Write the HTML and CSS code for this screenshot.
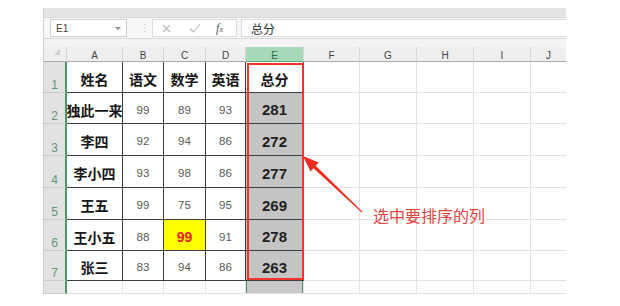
FILE: index.html
```html
<!DOCTYPE html>
<html lang="zh-CN">
<head>
  <meta charset="UTF-8" />
  <meta name="viewport" content="width=device-width, initial-scale=1.0"/>
  <title>选中要排序的列</title>
  <link rel="stylesheet" href="styles.css">
</head>
<body>

  <div class="sheet">
    <div class="ribbon-edge"></div>

    <!-- Formula bar -->
    <div class="formula-bar">
      <div class="name-box">E1<span class="drop"></span></div>
      <span class="grip">⋮</span>
      <div class="fx-tools">
        <svg class="tool-x" width="9" height="9" viewBox="0 0 9 9"><path d="M1 1L8 8M8 1L1 8" stroke="#b9b9b9" stroke-width="1.1" fill="none"/></svg>
        <svg class="tool-ok" width="12" height="10" viewBox="0 0 12 10"><path d="M1 5.5L4.5 9L11 1" stroke="#b9b9b9" stroke-width="1.1" fill="none"/></svg>
        <span class="fx">f<i>x</i></span>
      </div>
      <div class="formula-input">总分</div>
    </div>

    <!-- Grid -->
    <div class="grid">
      <div class="corner"><span class="corner-mark"></span></div>
      <div class="col-head">A</div>
      <div class="col-head">B</div>
      <div class="col-head">C</div>
      <div class="col-head">D</div>
      <div class="col-head sel">E</div>
      <div class="col-head">F</div>
      <div class="col-head">G</div>
      <div class="col-head">H</div>
      <div class="col-head">I</div>
      <div class="col-head">J</div>

      <div class="row-head">1</div>
      <div class="t name">姓名</div>
      <div class="t name">语文</div>
      <div class="t name">数学</div>
      <div class="t name">英语</div>
      <div class="t name">总分</div>
      <div class="c"></div><div class="c"></div><div class="c"></div><div class="c"></div><div class="c"></div>

      <div class="row-head">2</div>
      <div class="t name">独此一来</div>
      <div class="t num">99</div>
      <div class="t num">89</div>
      <div class="t num">93</div>
      <div class="t total">281</div>
      <div class="c"></div><div class="c"></div><div class="c"></div><div class="c"></div><div class="c"></div>

      <div class="row-head">3</div>
      <div class="t name">李四</div>
      <div class="t num">92</div>
      <div class="t num">94</div>
      <div class="t num">86</div>
      <div class="t total">272</div>
      <div class="c"></div><div class="c"></div><div class="c"></div><div class="c"></div><div class="c"></div>

      <div class="row-head">4</div>
      <div class="t name">李小四</div>
      <div class="t num">93</div>
      <div class="t num">98</div>
      <div class="t num">86</div>
      <div class="t total">277</div>
      <div class="c"></div><div class="c"></div><div class="c"></div><div class="c"></div><div class="c"></div>

      <div class="row-head">5</div>
      <div class="t name">王五</div>
      <div class="t num">99</div>
      <div class="t num">75</div>
      <div class="t num">95</div>
      <div class="t total">269</div>
      <div class="c"></div><div class="c"></div><div class="c"></div><div class="c"></div><div class="c"></div>

      <div class="row-head">6</div>
      <div class="t name">王小五</div>
      <div class="t num">88</div>
      <div class="t hl">99</div>
      <div class="t num">91</div>
      <div class="t total">278</div>
      <div class="c"></div><div class="c"></div><div class="c"></div><div class="c"></div><div class="c"></div>

      <div class="row-head">7</div>
      <div class="t name">张三</div>
      <div class="t num">83</div>
      <div class="t num">94</div>
      <div class="t num">86</div>
      <div class="t total">263</div>
      <div class="c"></div><div class="c"></div><div class="c"></div><div class="c"></div><div class="c"></div>

      <div class="row-head"></div>
      <div class="c"></div>
      <div class="c"></div>
      <div class="c"></div>
      <div class="c"></div>
      <div class="c picked"></div>
      <div class="c"></div><div class="c"></div><div class="c"></div><div class="c"></div><div class="c"></div>
    </div>

    <!-- red frame drawn over column E -->
    <div class="pick-box"></div>
  </div>

  <!-- Annotation -->
  <svg class="annot" width="620" height="306" viewBox="0 0 620 306">
    <polygon fill="#f02c20" points="303,156 318.7,162.6 315.7,165.8 362.3,211.6 361.7,212.4 313.5,168.2 310.5,171.4"/>
  </svg>
  <div class="note">选中要排序的列</div>

</body>
</html>
```

FILE: styles.css
```css
* {
  box-sizing: border-box;
}

body {
  margin: 0;
  padding: 8px 0 0 44px;
  width: 620px;
  height: 306px;
  overflow: hidden;
  position: relative;
  background: #fff;
  font-family: "Liberation Sans", "Noto Sans CJK SC", sans-serif;
  color: #333;
}

.sheet {
  position: relative;
  width: 523px;
  height: 286px;
  overflow: hidden;
  background: #f4f4f4;
  border-left: 1px solid #cfcfcf;
  margin-left: -1px;
}

.ribbon-edge {
  height: 10px;
  background: #e4e4e4;
  border-bottom: 1px solid #d9d9d9;
}

/* Formula bar */
.formula-bar {
  height: 21px;
  display: flex;
  align-items: center;
  padding-left: 6px;
  background: #f8f8f8;
  border-bottom: 1px solid #d8d8d8;
}

.name-box {
  position: relative;
  width: 77px;
  height: 18px;
  padding: 3px 0 0 5px;
  background: #fff;
  border: 1px solid #cdcdcd;
  font-size: 10px;
  color: #444;
}

.drop {
  position: absolute;
  right: 5px;
  top: 7px;
  border-left: 3px solid transparent;
  border-right: 3px solid transparent;
  border-top: 3px solid #888;
}

.grip {
  margin-left: 12px;
  width: 6px;
  font-size: 11px;
  color: #c4c4c4;
}

.fx-tools {
  display: flex;
  align-items: center;
  width: 85px;
  height: 18px;
  margin-left: 7px;
  background: #fff;
  border: 1px solid #dcdcdc;
}

.tool-x {
  margin-left: 9px;
}

.tool-ok {
  margin-left: 18px;
}

.fx {
  margin-left: 15px;
  font-family: "Liberation Serif", serif;
  font-style: italic;
  font-size: 12px;
  color: #555;
}

.fx i {
  font-size: 9px;
}

.formula-input {
  flex: 1;
  height: 18px;
  margin-left: 4px;
  padding: 1px 0 0 9px;
  background: #fff;
  border: 1px solid #dcdcdc;
  border-right: none;
  font-family: "Noto Sans CJK SC", sans-serif;
  font-size: 12px;
  line-height: 15px;
  color: #333;
}

/* Grid */
.grid {
  margin-top: 8px;
  display: grid;
  grid-template-columns: 23px 56px 41px 42px 40px 58px 56px 57px 57px 57px 36px;
  grid-template-rows: 15px 31px 31px 32px 32px 32px 31px 30px 13px;
  background: #fff;
}

.corner,
.col-head {
  position: relative;
  background: #efefef;
  border-right: 1px solid #d6d6d6;
  border-bottom: 1px solid #a9a9a9;
  display: flex;
  justify-content: center;
  padding-top: 3px;
  font-size: 10px;
  line-height: 11px;
  color: #444;
}

.corner-mark {
  position: absolute;
  right: 6px;
  bottom: 6px;
  border-left: 6px solid transparent;
  border-bottom: 6px solid #cdcdcd;
}

.col-head.sel {
  background: #a6d8b9;
  color: #2a6d45;
  border-bottom-color: #62a77d;
}

.row-head {
  display: flex;
  align-items: flex-end;
  justify-content: center;
  padding-bottom: 1px;
  background: #e2e2e2;
  border-bottom: 1px solid #cbcbcb;
  border-right: 2px solid #4e9469;
  font-size: 12px;
  line-height: 12px;
  color: #5c9675;
}

.c {
  border-right: 1px solid #e2e2e2;
  border-bottom: 1px solid #e2e2e2;
}

.t {
  display: flex;
  align-items: center;
  justify-content: center;
  padding-top: 3px;
  overflow: hidden;
  white-space: nowrap;
  border-right: 1px solid #3e3e3e;
  border-bottom: 1px solid #3e3e3e;
}

.name {
  font-family: "Noto Sans CJK SC", sans-serif;
  font-weight: bold;
  font-size: 14px;
  color: #151515;
}

.num {
  font-size: 11.5px;
  color: #5a5a5a;
}

.total {
  background: #c4c4c4;
  font-size: 15px;
  font-weight: bold;
  color: #1f1f1f;
}

.hl {
  background: #ffff00;
  font-size: 14px;
  font-weight: bold;
  color: #e8261e;
}

.picked {
  background: #c8c8c8;
  box-shadow: inset 1px 0 #4e9469, inset -1px 0 #4e9469;
}

.pick-box {
  position: absolute;
  left: 203px;
  top: 55px;
  width: 57px;
  height: 217px;
  border: 2px solid #f2352a;
}

/* Annotation */
.annot {
  position: absolute;
  left: 0;
  top: 0;
}

.note {
  position: absolute;
  left: 373px;
  top: 207px;
  font-family: "Noto Sans CJK SC", sans-serif;
  font-size: 16px;
  line-height: 16px;
  color: #e4433f;
}
```
